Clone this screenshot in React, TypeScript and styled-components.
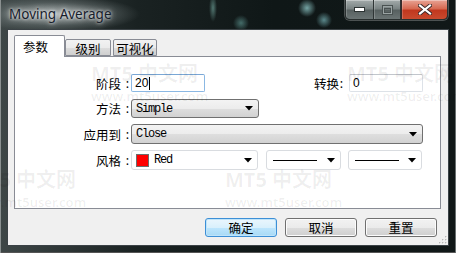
import React from 'react';
import styled, {createGlobalStyle} from 'styled-components';

const GlobalStyle = createGlobalStyle`
  html, body {
    margin: 0;
    padding: 0;
    background: #000;
  }
  body {
    font-family: "Noto Sans", "Noto Sans CJK SC", sans-serif;
  }
`

const cjk = `"Noto Sans CJK SC", "Noto Sans", sans-serif`
const mono = `"Liberation Mono", "Noto Sans CJK SC", monospace`

const Window = styled.div`
  position: relative;
  width: 456px;
  height: 253px;
  box-sizing: border-box;
  padding: 0 7px 7px 7px;
  display: flex;
  flex-direction: column;
  overflow: hidden;
  background: radial-gradient(ellipse 85px 18px at 55px 14px, rgba(205, 212, 212, 0.8), rgba(120, 130, 130, 0.4) 65%, transparent 100%),
  radial-gradient(circle 9px at 307px 8px, rgba(150, 210, 210, 0.75), transparent),
  radial-gradient(circle 8px at 324px 20px, rgba(130, 195, 200, 0.65), transparent),
  radial-gradient(circle 8px at 241px 23px, rgba(110, 175, 170, 0.55), transparent),
  radial-gradient(ellipse 4px 14px at 213px 8px, rgba(130, 190, 180, 0.55), transparent),
  linear-gradient(90deg, #3e4747 0%, #1a2222 30%, #0f1717 60%, #111818 100%);
  box-shadow: inset 1px 0 0 #8a9090, inset -1px 0 0 #6a7070, inset 0 -1px 0 #555;
`

const TitleBar = styled.div`
  height: 29px;
  flex: none;
  display: flex;
  align-items: flex-start;
`

const Title = styled.div`
  margin: 6px 0 0 2px;
  font-family: "Noto Sans", sans-serif;
  font-size: 13.5px;
  line-height: 16px;
  color: #17202c;
  text-shadow: 0 0 6px rgba(255, 255, 255, 0.9), 0 0 3px rgba(255, 255, 255, 0.8);
`

const CaptionGroup = styled.div`
  margin-left: auto;
  margin-right: 1px;
  display: flex;
  height: 19px;
  border: 1px solid #2a3030;
  border-top: none;
  border-radius: 0 0 5px 5px;
  overflow: hidden;
  box-shadow: 0 0 0 1px rgba(255, 255, 255, 0.25);
`

const CaptionButton = styled.div<{ $w: number; $close?: boolean }>`
  width: ${p => p.$w}px;
  height: 19px;
  display: flex;
  align-items: center;
  justify-content: center;
  box-sizing: border-box;
  border-left: ${p => p.$close ? '1px solid #3a2a28' : 'none'};
  border-right: ${p => p.$close ? 'none' : '1px solid #2f3535'};
  background: ${p => p.$close
          ? 'linear-gradient(#e8a394 0%, #d66a52 45%, #c1381f 55%, #c84a2e 100%)'
          : 'linear-gradient(#a3abab 0%, #7b8484 45%, #586161 55%, #6b7474 100%)'};
  box-shadow: inset 0 1px 0 rgba(255, 255, 255, 0.35), inset 1px 0 0 rgba(255, 255, 255, 0.2);
`

const Client = styled.div`
  flex: 1;
  display: flex;
  flex-direction: column;
  background: #f0f0f0;
  border: 1px solid #3b4246;
  padding: 5px 7px 0 6px;
  position: relative;
`

const TabStrip = styled.div`
  display: flex;
  align-items: flex-end;
  height: 21px;
  position: relative;
  z-index: 2;
`

const Tab = styled.div<{ $active?: boolean; $w: number; $gap?: number }>`
  box-sizing: border-box;
  width: ${p => p.$w}px;
  height: ${p => p.$active ? 22 : 17}px;
  margin-bottom: ${p => p.$active ? -1 : 0}px;
  margin-left: ${p => p.$gap ?? 0}px;
  display: flex;
  align-items: center;
  justify-content: ${p => p.$active ? 'flex-start' : 'center'};
  padding-left: ${p => p.$active ? 8 : 0}px;
  padding-top: ${p => p.$active ? 0 : 2}px;
  border: 1px solid #898c95;
  border-bottom: ${p => p.$active ? 'none' : '1px solid #898c95'};
  border-radius: 2px 2px 0 0;
  background: ${p => p.$active ? '#fff' : 'linear-gradient(#f2f2f2, #ebebeb 50%, #dddddd 51%, #cfcfcf)'};
  font-family: ${cjk};
  font-size: 12.5px;
  color: #000;
`

const Panel = styled.div`
  height: 153px;
  box-sizing: border-box;
  background: #fff;
  border: 1px solid #898c95;
  padding-top: 16px;
  display: flex;
  flex-direction: column;
  gap: 6px;
`

const Row = styled.div<{ $h?: number }>`
  display: flex;
  align-items: center;
  height: ${p => p.$h ?? 20}px;
`

const Label = styled.div<{ $w?: number }>`
  width: ${p => p.$w ? `${p.$w}px` : 'auto'};
  display: flex;
  justify-content: flex-end;
  align-items: center;
  font-family: ${cjk};
  font-size: 12.5px;
  color: #000;
  white-space: nowrap;
`

const Colon = styled.span<{ $w: number; $pad: number }>`
  display: inline-block;
  width: ${p => p.$w}px;
  padding-right: ${p => p.$pad}px;
  box-sizing: border-box;
  text-align: right;
  font-family: "Noto Sans", sans-serif;
`

const TextBox = styled.div<{ $focused?: boolean }>`
  width: 74px;
  height: 18px;
  box-sizing: border-box;
  display: flex;
  align-items: center;
  padding-left: 3px;
  border: 1px solid ${p => p.$focused ? '#8bb8e3' : '#dde2e8'};
  border-top-color: ${p => p.$focused ? '#7aa7d6' : '#c2c6cc'};
  border-radius: 2px;
  background: #fff;
  font-family: "Liberation Sans", "Noto Sans", sans-serif;
  font-size: 12px;
  color: #000;
`

const Caret = styled.span`
  display: inline-block;
  width: 1px;
  height: 13px;
  margin-left: 1px;
  background: #000;
`

const Combo = styled.div<{ $w: number; $flat?: boolean; $ml?: number }>`
  width: ${p => p.$w}px;
  height: 100%;
  margin-left: ${p => p.$ml ?? 0}px;
  box-sizing: border-box;
  display: flex;
  align-items: center;
  padding: 0 4px 0 4px;
  border: 1px solid ${p => p.$flat ? '#d9dce0' : '#707070'};
  border-radius: 3px;
  background: ${p => p.$flat ? '#fff' : 'linear-gradient(#f3f3f3, #ececec 50%, #dedede 51%, #d2d2d2)'};
  font-family: ${mono};
  font-size: 12px;
  letter-spacing: -1.2px;
  color: #000;
`

const ComboText = styled.span`
  flex: 1;
  white-space: nowrap;
`

const Swatch = styled.span`
  width: 13px;
  height: 13px;
  box-sizing: border-box;
  margin-right: 5px;
  background: #ff0000;
  border: 1px solid #6d6d6d;
`

const LineSample = styled.span<{ $w: number }>`
  width: ${p => p.$w}px;
  height: 1px;
  margin-left: 2px;
  background: #000;
  margin-right: auto;
`

const Arrow = () => (
    <svg width="8" height="5" viewBox="0 0 8 5" style={{flex: 'none', marginRight: 1}}>
        <polygon points="0,0 8,0 4,4.5" fill="#000"/>
    </svg>
)

const ButtonRow = styled.div`
  display: flex;
  justify-content: flex-end;
  gap: 8px;
  margin-top: 9px;
  padding-right: 4px;
`

const Button = styled.div<{ $default?: boolean }>`
  width: 72px;
  height: 19px;
  box-sizing: border-box;
  display: flex;
  align-items: center;
  justify-content: center;
  border: 1px solid ${p => p.$default ? '#3c8fd6' : '#707070'};
  border-radius: 3px;
  background: ${p => p.$default
          ? 'linear-gradient(#eaf6fd, #d9f0fc 50%, #bee6fd 51%, #a7d9f5)'
          : 'linear-gradient(#f2f2f2, #ebebeb 50%, #dddddd 51%, #cfcfcf)'};
  box-shadow: ${p => p.$default ? 'inset 0 0 0 1px #bfe4fa' : 'inset 0 0 0 1px #fcfcfc'};
  font-family: ${cjk};
  font-size: 12.5px;
  color: #000;
`

const Grip = styled.svg`
  position: absolute;
  right: 1px;
  bottom: 1px;
`

const WatermarkLayer = styled.div`
  position: absolute;
  inset: 0;
  pointer-events: none;
  z-index: 5;
`

const Mark = styled.div<{ $x: number; $y: number }>`
  position: absolute;
  left: ${p => p.$x}px;
  top: ${p => p.$y}px;
  color: rgba(0, 0, 0, 0.065);
  white-space: nowrap;
`

const MarkBig = styled.div`
  font-family: "Noto Sans", "Noto Sans CJK SC", sans-serif;
  font-weight: 700;
  font-size: 20px;
  line-height: 22px;
`

const MarkSmall = styled.div`
  font-family: "Noto Sans", sans-serif;
  font-weight: 600;
  font-size: 13px;
  line-height: 14px;
  margin-top: 4px;
`

const marks = [
    {x: 91, y: 63},
    {x: 347, y: 63},
    {x: 225, y: 169},
    {x: -31, y: 169},
]

const App: React.FC = () => {
    return (
        <>
            <GlobalStyle/>
            <Window>
                <TitleBar>
                    <Title>Moving Average</Title>
                    <CaptionGroup>
                        <CaptionButton $w={28}>
                            <svg width="11" height="5" viewBox="0 0 11 5">
                                <rect x="0.5" y="0.5" width="10" height="4" fill="#fff" stroke="#2c3333"/>
                            </svg>
                        </CaptionButton>
                        <CaptionButton $w={27}>
                            <svg width="11" height="10" viewBox="0 0 11 10">
                                <rect x="0.5" y="0.5" width="10" height="9" fill="none" stroke="#4a5252"/>
                                <rect x="1.5" y="1.5" width="8" height="7" fill="none" stroke="#9aa3a3" strokeWidth="1"/>
                                <rect x="2.5" y="3.5" width="6" height="4" fill="none" stroke="#4a5252"/>
                            </svg>
                        </CaptionButton>
                        <CaptionButton $w={46} $close>
                            <svg width="14" height="11" viewBox="0 0 14 11">
                                <path d="M2 1.5 L12 9.5 M12 1.5 L2 9.5" stroke="#3a2a2a" strokeWidth="4" strokeLinecap="square"/>
                                <path d="M2 1.5 L12 9.5 M12 1.5 L2 9.5" stroke="#fff" strokeWidth="2.2" strokeLinecap="square"/>
                            </svg>
                        </CaptionButton>
                    </CaptionGroup>
                </TitleBar>

                <Client>
                    <TabStrip>
                        <Tab $active $w={51}>参数</Tab>
                        <Tab $w={46}>级别</Tab>
                        <Tab $w={44} $gap={2}>可视化</Tab>
                    </TabStrip>

                    <Panel>
                        <Row>
                            <Label $w={116}>阶段<Colon $w={10} $pad={2}>:</Colon></Label>
                            <TextBox $focused>20<Caret/></TextBox>
                            <Label style={{marginLeft: 'auto'}}>转换<Colon $w={10} $pad={6}>:</Colon></Label>
                            <TextBox style={{marginRight: 17}}>0</TextBox>
                        </Row>
                        <Row $h={19}>
                            <Label $w={116}>方法<Colon $w={10} $pad={2}>:</Colon></Label>
                            <Combo $w={128}>
                                <ComboText>Simple</ComboText>
                                <Arrow/>
                            </Combo>
                        </Row>
                        <Row>
                            <Label $w={116}>应用到<Colon $w={10} $pad={2}>:</Colon></Label>
                            <Combo $w={292}>
                                <ComboText>Close</ComboText>
                                <Arrow/>
                            </Combo>
                        </Row>
                        <Row>
                            <Label $w={116}>风格<Colon $w={10} $pad={2}>:</Colon></Label>
                            <Combo $w={127} $flat>
                                <Swatch/>
                                <ComboText>Red</ComboText>
                                <Arrow/>
                            </Combo>
                            <Combo $w={75} $flat $ml={8}>
                                <LineSample $w={44}/>
                                <Arrow/>
                            </Combo>
                            <Combo $w={74} $flat $ml={7}>
                                <LineSample $w={44}/>
                                <Arrow/>
                            </Combo>
                        </Row>
                    </Panel>

                    <ButtonRow>
                        <Button $default>确定</Button>
                        <Button>取消</Button>
                        <Button>重置</Button>
                    </ButtonRow>

                    <Grip width="9" height="9" viewBox="0 0 9 9">
                        {[[7, 1], [7, 4], [4, 4], [7, 7], [4, 7], [1, 7]].map(([x, y]) => (
                            <g key={`${x}-${y}`}>
                                <rect x={x + 0.6} y={y + 0.6} width="1.4" height="1.4" fill="#fff"/>
                                <rect x={x} y={y} width="1.4" height="1.4" fill="#b8b8b8"/>
                            </g>
                        ))}
                    </Grip>
                </Client>

                <WatermarkLayer>
                    {marks.map(m => (
                        <Mark key={`${m.x}-${m.y}`} $x={m.x} $y={m.y}>
                            <MarkBig>MT5 中文网</MarkBig>
                            <MarkSmall>www.mt5user.com</MarkSmall>
                        </Mark>
                    ))}
                </WatermarkLayer>
            </Window>
        </>
    );
};

export default App;
